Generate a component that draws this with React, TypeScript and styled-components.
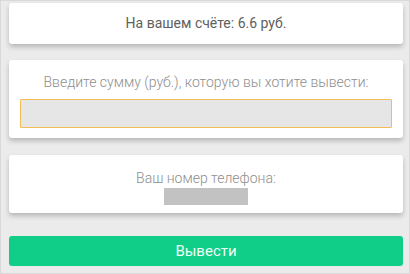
import React from "react";
import styled, { createGlobalStyle } from "styled-components";

const Global = createGlobalStyle`
  html, body { margin: 0; padding: 0; }
  body { background: #ebebeb; font-family: Roboto, "Noto Sans", sans-serif; }
  * { box-sizing: border-box; }
`;

const Page = styled.div`
  width: 410px;
  height: 274px;
  border: 1px solid #d9d9d9;
  background: #ebebeb;
  padding: 2px 6px 0 8px;
  display: flex;
  flex-direction: column;
`;

const Card = styled.div<{ $h: number; $mt: number }>`
  background: #fff;
  border-radius: 3px;
  box-shadow: 0 3px 5px rgba(0, 0, 0, 0.22);
  height: ${(p) => p.$h}px;
  margin-top: ${(p) => p.$mt}px;
  display: flex;
  flex-direction: column;
  align-items: center;
`;

const Balance = styled.div`
  font-size: 14px;
  font-weight: 400;
  color: #606060;
  line-height: 41px;
`;

const Label = styled.div<{ $pt: number }>`
  font-size: 14px;
  font-weight: 300;
  color: #8e8e8e;
  line-height: 16px;
  padding-top: ${(p) => p.$pt}px;
`;

const Input = styled.div`
  align-self: stretch;
  margin: 9px 11px 0;
  height: 29px;
  background: #e6e6e6;
  border: 1px solid #f4bd55;
  border-radius: 1px;
`;

const Phone = styled.div`
  width: 84px;
  height: 17px;
  background: #c2c2c2;
  margin-top: 2px;
`;

const Button = styled.button`
  margin-top: 23px;
  height: 30px;
  border: none;
  border-radius: 3px;
  background: #10cd88;
  color: #eefff6;
  font-family: Roboto, "Noto Sans", sans-serif;
  font-size: 15px;
  font-weight: 400;
  padding: 0;
`;

export default function App() {
  return (
    <>
      <Global />
      <Page>
        <Card $h={41} $mt={0}>
          <Balance>На вашем счёте: 6.6 руб.</Balance>
        </Card>
        <Card $h={78} $mt={16}>
          <Label $pt={14}>Введите сумму (руб.), которую вы хотите вывести:</Label>
          <Input />
        </Card>
        <Card $h={58} $mt={17}>
          <Label $pt={15}>Ваш номер телефона:</Label>
          <Phone />
        </Card>
        <Button>Вывести</Button>
      </Page>
    </>
  );
}
